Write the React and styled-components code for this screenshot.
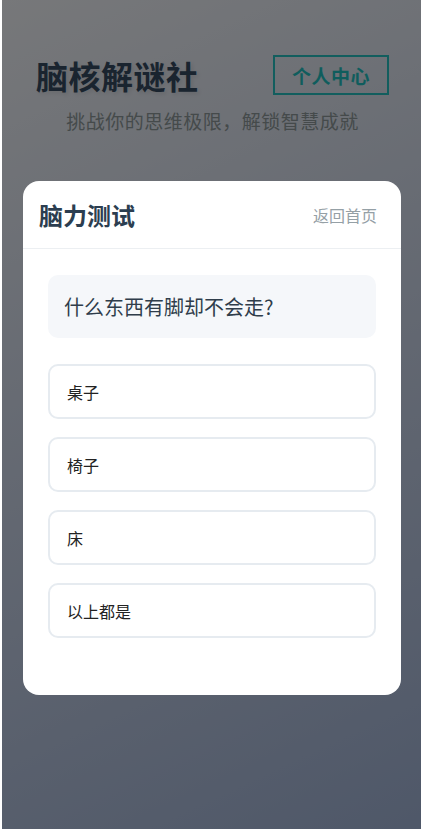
import React from "react";
import styled, { createGlobalStyle } from "styled-components";

const GlobalStyle = createGlobalStyle`
  html, body {
    margin: 0;
    padding: 0;
    background: #ffffff;
  }
  body {
    font-family: "Noto Sans CJK SC", "Noto Sans", "Liberation Sans", sans-serif;
  }
  * { box-sizing: border-box; }
`;

const Page = styled.div`
  position: relative;
  margin: 0 2px;
  min-height: 829px;
  background: linear-gradient(155deg, #eef0f4 0%, #9eb0d2 100%);
  overflow: hidden;
`;

const Backdrop = styled.div`
  position: absolute;
  inset: 0;
  background: rgba(0, 0, 0, 0.5);
  z-index: 1;
`;

const Header = styled.header`
  display: flex;
  flex-direction: column;
  padding: 55px 32px 0 34px;
`;

const TopRow = styled.div`
  display: flex;
  align-items: center;
  justify-content: space-between;
`;

const Brand = styled.h1`
  margin: 0;
  font-size: 32px;
  line-height: 40px;
  font-weight: 700;
  color: #34495e;
  text-shadow: 2px 2px 4px rgba(0, 0, 0, 0.1);
  letter-spacing: 0.5px;
`;

const ProfileButton = styled.button`
  height: 40px;
  width: 116px;
  padding: 0;
  background: transparent;
  border: 2px solid #24bdbd;
  color: #1fbaba;
  font-family: inherit;
  font-size: 19px;
  font-weight: 700;
  letter-spacing: 0.5px;
  display: flex;
  align-items: center;
  justify-content: center;
`;

const Tagline = styled.p`
  margin: 12px 0 0;
  text-align: center;
  font-size: 19px;
  line-height: 28px;
  letter-spacing: 0.5px;
  color: #8a9596;
`;

const Card = styled.section`
  position: relative;
  z-index: 2;
  margin: 46px 20px 0 21px;
  background: #ffffff;
  border-radius: 16px;
  overflow: hidden;
`;

const CardHeader = styled.div`
  height: 68px;
  display: flex;
  align-items: center;
  justify-content: space-between;
  padding: 0 24px 0 16px;
  border-bottom: 1px solid #eceff2;
`;

const CardTitle = styled.h2`
  margin: 0;
  font-size: 24px;
  line-height: 32px;
  font-weight: 700;
  color: #2c3e50;
`;

const BackLink = styled.span`
  font-size: 16px;
  color: #95a0a6;
`;

const CardBody = styled.div`
  display: flex;
  flex-direction: column;
  padding: 26px 25px 57px;
`;

const Question = styled.div`
  background: #f5f7fa;
  border-radius: 10px;
  padding: 16px 16px;
  font-size: 20px;
  line-height: 31px;
  color: #2f3d4b;
  margin-bottom: 26px;
`;

const Options = styled.div`
  display: flex;
  flex-direction: column;
  gap: 18px;
`;

const Option = styled.button`
  height: 55px;
  width: 100%;
  text-align: left;
  background: #ffffff;
  border: 2px solid #e6ebf0;
  border-radius: 10px;
  padding: 0 17px;
  font-family: inherit;
  font-size: 16px;
  color: #222222;
  display: flex;
  align-items: center;
`;

const options = ["桌子", "椅子", "床", "以上都是"];

export default function App() {
  return (
    <>
      <GlobalStyle />
      <Page>
        <Header>
          <TopRow>
            <Brand>脑核解谜社</Brand>
            <ProfileButton>个人中心</ProfileButton>
          </TopRow>
          <Tagline>挑战你的思维极限，解锁智慧成就</Tagline>
        </Header>
        <Backdrop />
        <Card>
          <CardHeader>
            <CardTitle>脑力测试</CardTitle>
            <BackLink>返回首页</BackLink>
          </CardHeader>
          <CardBody>
            <Question>什么东西有脚却不会走?</Question>
            <Options>
              {options.map((o) => (
                <Option key={o}>{o}</Option>
              ))}
            </Options>
          </CardBody>
        </Card>
      </Page>
    </>
  );
}
